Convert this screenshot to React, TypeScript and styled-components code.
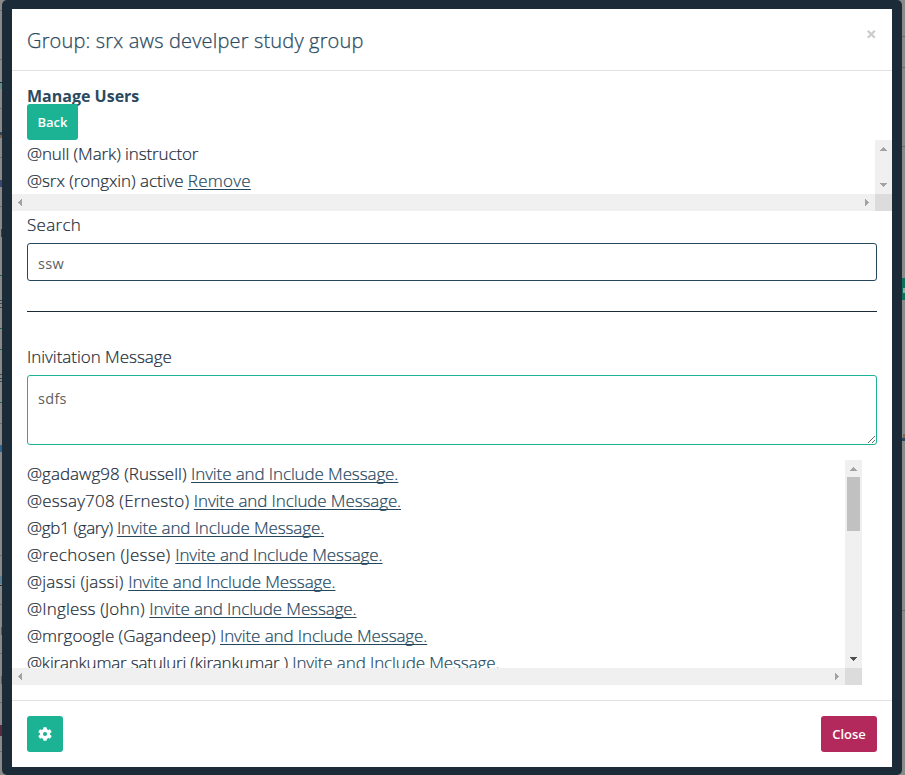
import React from 'react';
import styled, { createGlobalStyle } from 'styled-components';

const GlobalStyle = createGlobalStyle`
  * { box-sizing: border-box; }
  html, body { margin: 0; height: 100%; overflow: hidden; }
  body { font-family: 'Open Sans', 'Noto Sans', sans-serif; font-weight: 300; font-size: 17px; color: #1b2c38; }
`;

const Page = styled.div`
  display: grid;
  grid-template-columns: 2px 900px 3px;
  width: 905px;
  height: 775px;
  background: #8c8a89;
`;
const Edge = styled.div`
  position: relative;
  overflow: hidden;
`;
const Fragment = styled.i<{ $y: number; $h: number; $c: string; $x?: number }>`
  position: absolute;
  top: ${(p) => p.$y}px;
  left: ${(p) => p.$x ?? 0}px;
  right: 0;
  height: ${(p) => p.$h}px;
  background: ${(p) => p.$c};
`;
const Frame = styled.div`
  padding: 9px 10px 8px;
  border-radius: 5px;
  background: #1b2c38;
`;
const Dialog = styled.section`
  display: flex;
  flex-direction: column;
  height: 758px;
  background: #fff;
`;
const Header = styled.header`
  display: flex;
  justify-content: space-between;
  flex: none;
  height: 62px;
  padding: 18px 15px 0;
  border-bottom: 1px solid #e2e2e2;
`;
const Title = styled.h4`
  margin: 0;
  font-size: 20px;
  font-weight: 300;
  line-height: 28px;
  letter-spacing: 0.17px;
  color: #2b4a60;
  -webkit-text-stroke: 0.25px currentColor;
`;
const Dismiss = styled.button`
  width: 11px;
  height: 16px;
  margin: -1px 0 0;
  padding: 0;
  border: 0;
  background: none;
  color: #ccc;
  svg { display: block; }
`;
const Heading = styled.h5`
  height: 17px;
  margin: 16px 15px 0;
  font-size: 16px;
  font-weight: 700;
  line-height: 19px;
  color: #2b4a60;
`;
const Button = styled.button<{ $bg: string; $w: number }>`
  display: flex;
  align-items: center;
  justify-content: center;
  width: ${(p) => p.$w}px;
  height: 36px;
  padding: 0;
  border: 0;
  border-radius: 3px;
  background: ${(p) => p.$bg};
  color: #fff;
  font: 600 13px/18px 'Open Sans', sans-serif;
`;
const BackSlot = styled.div`
  position: relative;
  height: 36px;
  margin: 0 15px;
`;
const ScrollPane = styled.div<{ $w: number; $h: number; $top?: number }>`
  display: grid;
  flex: none;
  grid-template-columns: 1fr 17px;
  grid-template-rows: 1fr 17px;
  width: ${(p) => p.$w}px;
  height: ${(p) => p.$h}px;
  margin-top: ${(p) => p.$top ?? 0}px;
`;
const Viewport = styled.div`
  overflow: hidden;
  min-height: 0;
  padding-left: 15px;
`;
const UserRow = styled.div`
  height: 27px;
  line-height: 28px;
  white-space: pre;
  -webkit-text-stroke: 0.2px currentColor;
`;
const Name = styled.span<{ $track: number }>`
  letter-spacing: ${(p) => p.$track}px;
`;
const Action = styled.a<{ $track?: number }>`
  color: #24475e;
  letter-spacing: ${(p) => p.$track ?? -0.11}px;
  text-decoration: underline;
  text-decoration-thickness: 1px;
  text-underline-offset: 2px;
  text-decoration-skip-ink: none;
`;
const Track = styled.div<{ $vertical?: boolean }>`
  display: flex;
  flex-direction: ${(p) => (p.$vertical ? 'column' : 'row')};
  justify-content: space-between;
  align-items: center;
  background: #f0f0f0;
  svg { display: block; flex: none; }
`;
const Thumb = styled.div`
  width: 13px;
  height: 54px;
  margin-bottom: auto;
  background: #c1c1c1;
`;
const Corner = styled.div`
  background: #dcdcdc;
`;
const Label = styled.label<{ $top: number; $track: number }>`
  display: block;
  height: 24px;
  margin: ${(p) => p.$top}px 15px 0;
  line-height: 24px;
  letter-spacing: ${(p) => p.$track}px;
  -webkit-text-stroke: 0.2px currentColor;
`;
const fieldStyle = `
  display: block;
  flex: none;
  width: 850px;
  margin: 6px 15px 0;
  border-radius: 3px;
  outline: 0;
  background: #fff;
  color: #606060;
  font: 400 14.5px/20px 'Open Sans', sans-serif;
  letter-spacing: 0.3px;
`;
const SearchInput = styled.input`
  ${fieldStyle}
  height: 38px;
  padding: 4px 10px 2px;
  border: 1px solid #24475e;
`;
const MessageInput = styled.textarea`
  ${fieldStyle}
  height: 70px;
  padding: 13px 10px 11px;
  border: 1px solid #1cb394;
  resize: vertical;
`;
const Rule = styled.hr`
  flex: none;
  width: 850px;
  height: 1px;
  margin: 30px 15px 0;
  border: 0;
  background: #1b2c38;
`;
const Footer = styled.footer`
  display: flex;
  justify-content: space-between;
  margin-top: 15px;
  padding: 15px;
  border-top: 1px solid #e2e2e2;
`;

type Direction = 'up' | 'down' | 'left' | 'right';
const arrows: Record<Direction, string> = {
  up: 'M8 7h1v1h1v1h1v1h1v1H5v-1h1V9h1V8h1z',
  down: 'M5 6h7v1h-1v1h-1v1H9v1H8V9H7V8H6V7H5z',
  left: 'M6 8h1V7h1V6h1V5h1v7H9v-1H8v-1H7V9H6z',
  right: 'M7 5h1v1h1v1h1v1h1v1h-1v1H9v1H8v1H7z',
};
const Arrow = ({ dir, color = '#a3a3a3' }: { dir: Direction; color?: string }) => (
  <svg width="17" height="17" shapeRendering="crispEdges"><path d={arrows[dir]} fill={color} /></svg>
);
const HorizontalTrack = () => <Track><Arrow dir="left" /><Arrow dir="right" /></Track>;

const Gear = () => (
  <svg width="14" height="14" viewBox="0 0 14 14">
    <g fill="#fff">
      <circle cx="7" cy="7" r="5.2" />
      {[0, 60, 120].map((a) => (
        <rect key={a} x="5.2" y="0.2" width="3.6" height="13.6" rx="0.7" transform={`rotate(${a} 7 7)`} />
      ))}
    </g>
    <circle cx="7" cy="7" r="2.1" fill="#1cb394" />
  </svg>
);

const invitees: [string, number][] = [
  ['@gadawg98 (Russell)', 0.02],
  ['@essay708 (Ernesto)', 0.18],
  ['@gb1 (gary)', -0.35],
  ['@rechosen (Jesse)', 0.28],
  ['@jassi (jassi)', 0.2],
  ['@Ingless (John)', 0.17],
  ['@mrgoogle (Gagandeep)', -0.03],
  ['@kirankumar satuluri (kirankumar )', -0.2],
];

const leftLines = [10, 59, 108, 157, 206, 423, 555, 604, 653, 702, 751];
const greenLines = [275, 328, 349, 402];
const darkLines = [300, 303, 307, 374, 378, 381];
const rightLines = [36, 67, 146, 610];

export default function App() {
  return (
    <>
      <GlobalStyle />
      <Page>
        <Edge>
          {leftLines.map((y) => <Fragment key={y} $y={y} $h={1} $c="#706e6d" />)}
          {greenLines.map((y) => <Fragment key={y} $y={y} $h={1} $c="#116b58" />)}
          {darkLines.map((y) => <Fragment key={y} $y={y} $h={1} $c="#43494e" />)}
          <Fragment $y={82} $h={1} $c="#1b2c38" />
          <Fragment $y={83} $h={6} $c="#66898c" />
          <Fragment $y={132} $h={3} $c="#31465b" />
          <Fragment $y={135} $h={3} $c="#81664b" />
          <Fragment $y={180} $h={7} $c="#3c4771" />
          <Fragment $y={229} $h={8} $x={1} $c="#5e3026" />
          <Fragment $y={445} $h={7} $c="#32648b" />
          <Fragment $y={576} $h={8} $c="#5a7f95" />
          <Fragment $y={585} $h={1} $c="#1b2c38" />
          <Fragment $y={627} $h={8} $x={1} $c="#70583c" />
          <Fragment $y={676} $h={8} $x={1} $c="#70583c" />
          <Fragment $y={725} $h={11} $c="#562b40" />
        </Edge>
        <Frame>
          <Dialog>
            <Header>
              <Title>Group: srx aws develper study group</Title>
              <Dismiss aria-label="Dismiss">
                <svg width="11" height="16"><path d="M1.8 4.8l7 7M8.8 4.8l-7 7" stroke="currentColor" strokeWidth="2.3" /></svg>
              </Dismiss>
            </Header>
            <Heading>Manage Users</Heading>
            <BackSlot><Button $bg="#1cb394" $w={51}>Back</Button></BackSlot>
            <ScrollPane $w={880} $h={71}>
              <Viewport>
                <UserRow><Name $track={-0.11}>@null (Mark) instructor</Name></UserRow>
                <UserRow><Name $track={-0.06}>@srx (rongxin) active </Name><Action $track={0.25}>Remove</Action></UserRow>
              </Viewport>
              <Track $vertical><Arrow dir="up" /><Arrow dir="down" /></Track>
              <HorizontalTrack />
              <Corner />
            </ScrollPane>
            <Label $top={2} $track={0.3}>Search</Label>
            <SearchInput defaultValue="ssw" />
            <Rule />
            <Label $top={33} $track={-0.03}>Inivitation Message</Label>
            <MessageInput defaultValue="sdfs" />
            <ScrollPane $w={850} $h={225} $top={15}>
              <Viewport>
                {invitees.map(([name, track]) => (
                  <UserRow key={name}><Name $track={track}>{name} </Name><Action>Invite and Include Message.</Action></UserRow>
                ))}
              </Viewport>
              <Track $vertical><Arrow dir="up" /><Thumb /><Arrow dir="down" color="#505050" /></Track>
              <HorizontalTrack />
              <Corner />
            </ScrollPane>
            <Footer>
              <Button $bg="#1cb394" $w={36} aria-label="Settings"><Gear /></Button>
              <Button $bg="#b4295b" $w={56}>Close</Button>
            </Footer>
          </Dialog>
        </Frame>
        <Edge>
          {rightLines.map((y) => <Fragment key={y} $y={y} $h={1} $c="#706e6d" />)}
          <Fragment $y={278} $h={22} $c="#11705c" />
          <Fragment $y={288} $h={5} $x={1} $c="#9aa9a3" />
          <Fragment $y={434} $h={4} $x={1} $c="#81664b" />
          <Fragment $y={438} $h={3} $c="#31465b" />
        </Edge>
      </Page>
    </>
  );
}
